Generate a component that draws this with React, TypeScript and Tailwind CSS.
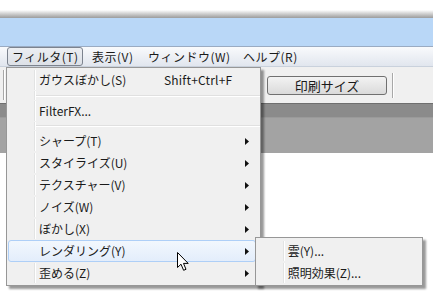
import React from 'react';

const font = { fontFamily: '"Noto Sans CJK JP", "Noto Sans", sans-serif' };

const Arrow = () => (
  <svg width="4" height="7" viewBox="0 0 4 7" className="shrink-0">
    <path d="M0 0 L4 3.5 L0 7 Z" fill="#111" />
  </svg>
);

interface RowProps {
  label: string;
  shortcut?: string;
  sub?: boolean;
  active?: boolean;
}

const Row: React.FC<RowProps> = ({ label, shortcut, sub, active }) => (
  <div
    className={`flex items-center h-[22px] ml-[1px] mr-[4px] border rounded-[3px] ${
      active ? 'border-[#aecff7] bg-linear-to-b from-[#f2f7fd] to-[#e3edfb]' : 'border-transparent'
    }`}
  >
    <div className={`w-[26px] h-full border-r ${active ? 'border-transparent' : 'border-[#e2e3e3]'}`} />
    <div className={`w-[1px] h-full ${active ? '' : 'bg-white'}`} />
    <span className="pl-[3px] w-[128px] whitespace-nowrap leading-none">{label}</span>
    <span className="flex-1 whitespace-nowrap leading-none tracking-[0.2px]">{shortcut}</span>
    {sub && <Arrow />}
    <div className="w-[6px]" />
  </div>
);

const Sep: React.FC<{ h: string }> = ({ h }) => (
  <div className={`flex ml-[2px] ${h}`}>
    <div className="w-[26px] h-full border-r border-[#e2e3e3]" />
    <div className="w-[1px] h-full bg-white" />
    <div className="flex-1 flex flex-col justify-center">
      <div className="h-[1px] bg-[#e0e0e0]" />
      <div className="h-[1px] bg-white" />
    </div>
  </div>
);

export default function App() {
  return (
    <div className="relative w-[433px] h-[298px] overflow-hidden bg-white text-[12px] text-[#1a1a1a]" style={font}>
      {/* window frame top */}
      <div className="h-[10px] bg-white" />
      <div className="h-[8px] bg-linear-to-b from-white to-[#9c9c9c]" />
      <div className="h-[28px] bg-[#b9d7f7]" />
      <div className="h-[1px] bg-[#9aabc2]" />

      {/* menu bar */}
      <div className="h-[20px] flex items-center bg-linear-to-b from-[#f9fafc] to-[#e1e6ee] border-b border-[#c9d1dc]">
        <div className="ml-[7px] w-[76px] h-[19px] pl-[4px] flex items-center border border-[#7c838e] rounded-[3px] bg-linear-to-b from-[#eceef2] to-[#dde1e7] leading-none tracking-[0.5px]">
          フィルタ(T)
        </div>
        <span className="ml-[9px] w-[56px] leading-none tracking-[0.5px]">表示(V)</span>
        <span className="w-[95px] leading-none tracking-[0.5px]">ウィンドウ(W)</span>
        <span className="leading-none tracking-[0.5px]">ヘルプ(R)</span>
      </div>

      {/* toolbar */}
      <div className="h-[36px] bg-[#f0f0f0] flex items-center">
        <div className="ml-[3px] w-[1px] h-[30px] bg-[#a8a8a8] shadow-[1px_0_0_#fff]" />
        <div className="ml-[263px] w-[120px] h-[19px] flex items-center justify-center border border-[#707070] rounded-[3px] bg-linear-to-b from-[#f3f3f3] to-[#dadada] leading-none text-[13px]">
          印刷サイズ
        </div>
        <div className="ml-[5px] w-[1px] h-[25px] bg-[#a8a8a8] shadow-[1px_0_0_#fff]" />
      </div>
      <div className="h-[1px] bg-[#6f6f6f]" />
      <div className="h-[13px] bg-[#8b8b8b]" />
      <div className="h-[1px] bg-[#9a9a9a]" />
      <div className="h-[35px] bg-[#a3a3a3]" />

      {/* dropdown */}
      <div className="absolute left-[6px] top-[67px] w-[255px] border border-[#979797] bg-[#f0f0f0] pt-[1px] pb-[1px] shadow-[3px_3px_2px_rgba(0,0,0,0.4)]">
        <Row label="ガウスぼかし(S)" shortcut="Shift+Ctrl+F" />
        <Sep h="h-[9px]" />
        <Row label="FilterFX..." />
        <Sep h="h-[8px]" />
        <Row label="シャープ(T)" sub />
        <Row label="スタイライズ(U)" sub />
        <Row label="テクスチャー(V)" sub />
        <Row label="ノイズ(W)" sub />
        <Row label="ぼかし(X)" sub />
        <Row label="レンダリング(Y)" sub active />
        <Row label="歪める(Z)" sub />
      </div>

      {/* submenu */}
      <div className="absolute left-[255px] top-[237px] w-[168px] border border-[#979797] bg-[#f0f0f0] pt-[2px] pb-[1px] shadow-[3px_3px_2px_rgba(0,0,0,0.4)]">
        <Row label="雲(Y)..." />
        <Row label="照明効果(Z)..." />
      </div>

      {/* mouse cursor */}
      <svg className="absolute left-[177px] top-[252px]" width="13" height="20" viewBox="0 0 13 20">
        <path
          d="M0.5 0.5 L0.5 15.5 L4 12.2 L6.6 18.3 L9 17.3 L6.5 11.4 L11.2 11.4 Z"
          fill="#fff"
          stroke="#000"
          strokeWidth="1"
          strokeLinejoin="miter"
        />
      </svg>
    </div>
  );
}
